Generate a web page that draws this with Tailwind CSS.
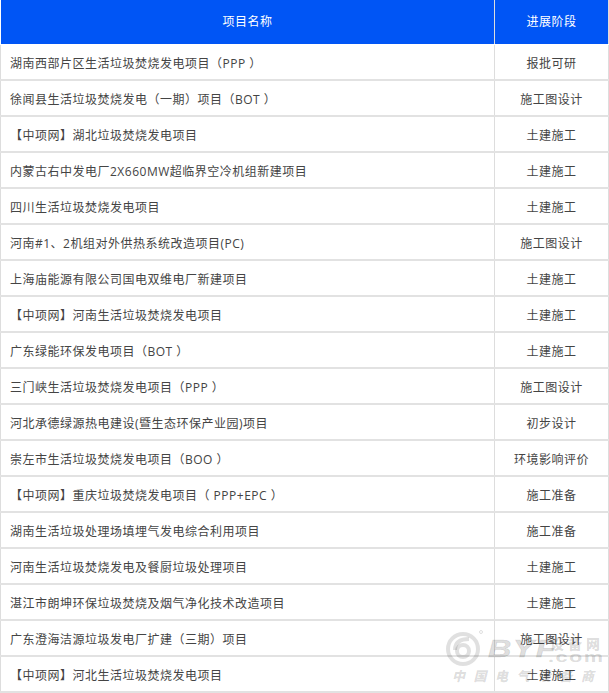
<!DOCTYPE html>
<html lang="en">
<head>
    <meta charset="UTF-8">
    <title>项目进展</title>
    <script src="https://cdn.jsdelivr.net/npm/@tailwindcss/browser@4"></script>
</head>
<body class="bg-white h-[693px] overflow-hidden relative font-['Open_Sans','Noto_Sans_CJK_SC',sans-serif] text-[12px] tracking-[0.5px] text-[#444]">
    <div class="w-[609px]">
        <div class="flex h-[44px] bg-[#0055f5] text-white ml-px">
            <div class="w-[493px] flex items-center justify-center">项目名称</div>
            <div class="flex-1 flex items-center justify-center border-x border-[#ddd]">进展阶段</div>
        </div>
        <div id="rows"></div>
    </div>

    <!-- watermark -->
    <div class="absolute left-[446px] top-[628px] w-[163px] h-[65px] pointer-events-none text-black/[0.15] font-black whitespace-nowrap">
        <svg class="absolute left-0 top-0" width="42" height="42" viewBox="0 0 42 42" fill="none" stroke="#000" stroke-opacity="0.12" stroke-width="4">
            <circle cx="17" cy="21" r="15"/>
            <circle cx="17" cy="23" r="6"/>
            <path d="M9 22 C9 14 15 11 23 11"/>
            <circle cx="35" cy="4" r="1.5" stroke-width="1"/>
        </svg>
        <div class="absolute left-[42px] top-[8px] origin-left scale-x-[1.35] font-['Liberation_Sans',sans-serif] font-bold italic text-[24px] leading-[26px] tracking-[1px] [-webkit-text-stroke:1px_rgba(0,0,0,0.08)]">BYF</div>
        <div class="absolute left-[104px] top-[6px] font-['Noto_Sans_CJK_SC',sans-serif] text-[14px] leading-[18px] tracking-[4px]">设备网</div>
        <div class="absolute left-[102px] top-[21px] origin-left scale-x-[1.45] font-['Liberation_Sans',sans-serif] font-bold text-[15px] leading-[16px] tracking-[1px]">.com</div>
        <div class="absolute left-[6px] top-[39px] font-['Noto_Sans_CJK_SC',sans-serif] italic text-[13px] leading-[17px] tracking-[8.5px]">中国电气设备商</div>
    </div>

    <script>
        const projects = [
            ['湖南西部片区生活垃圾焚烧发电项目（PPP ）', '报批可研'],
            ['徐闻县生活垃圾焚烧发电（一期）项目（BOT ）', '施工图设计'],
            ['【中项网】湖北垃圾焚烧发电项目', '土建施工'],
            ['内蒙古右中发电厂2X660MW超临界空冷机组新建项目', '土建施工'],
            ['四川生活垃圾焚烧发电项目', '土建施工'],
            ['河南#1、2机组对外供热系统改造项目(PC)', '施工图设计'],
            ['上海庙能源有限公司国电双维电厂新建项目', '土建施工'],
            ['【中项网】河南生活垃圾焚烧发电项目', '土建施工'],
            ['广东绿能环保发电项目（BOT ）', '土建施工'],
            ['三门峡生活垃圾焚烧发电项目（PPP ）', '施工图设计'],
            ['河北承德绿源热电建设(暨生态环保产业园)项目', '初步设计'],
            ['崇左市生活垃圾焚烧发电项目（BOO ）', '环境影响评价'],
            ['【中项网】重庆垃圾焚烧发电项目（ PPP+EPC ）', '施工准备'],
            ['湖南生活垃圾处理场填埋气发电综合利用项目', '施工准备'],
            ['河南生活垃圾焚烧发电及餐厨垃圾处理项目', '土建施工'],
            ['湛江市朗坤环保垃圾焚烧及烟气净化技术改造项目', '土建施工'],
            ['广东澄海洁源垃圾发电厂扩建（三期）项目', '施工图设计'],
            ['【中项网】河北生活垃圾焚烧发电项目', '土建施工'],
        ];

        // first row is 1px taller, the header has a white gap under it
        document.getElementById('rows').innerHTML = projects.map(([name, stage], i) => `
            <div class="flex ${i === 0 ? 'h-[37px] pt-px' : 'h-[36px]'} border-b-2 border-[#e2e2e2]">
                <div class="w-[494px] flex items-center pl-[9px] pt-[4px] whitespace-nowrap border-l border-[#ddd]">${name}</div>
                <div class="flex-1 flex items-center justify-center pt-[4px] border-x border-[#ddd]">${stage}</div>
            </div>`).join('');
    </script>
</body>
</html>
